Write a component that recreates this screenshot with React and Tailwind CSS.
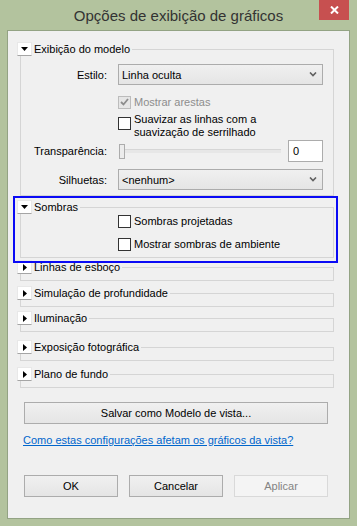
import React from 'react';

const Toggle = ({ open }) => (
  <div className="w-[15px] h-[14px] bg-white border border-[#e8e8e8] border-b-[#a5a5a5] flex items-center justify-center shrink-0">
    {open ? (
      <svg width="7" height="4" viewBox="0 0 7 4"><path d="M0 0h7L3.5 4z" fill="#000" /></svg>
    ) : (
      <svg width="4" height="7" viewBox="0 0 4 7"><path d="M0 0v7L4 3.5z" fill="#000" /></svg>
    )}
  </div>
);

const GroupHeader = ({ open, label }) => (
  <div className="flex items-center h-[14px]">
    <Toggle open={open} />
    <span className="ml-[2px] mr-[2px] leading-none whitespace-nowrap">{label}</span>
    <div className="flex-1 h-[7px] self-end border-t border-r border-[#d5d5d5]" />
  </div>
);

const Checkbox = ({ checked, disabled }) => (
  <div
    className={`w-[13px] h-[13px] shrink-0 border flex items-center justify-center ${
      disabled ? 'border-[#bcbcbc] bg-[#e6e6e6]' : 'border-[#333333] bg-white'
    }`}
  >
    {checked && (
      <svg width="9" height="8" viewBox="0 0 9 8">
        <path d="M1 4l2.5 2.5L8 1" stroke={disabled ? '#8d8d8d' : '#000'} strokeWidth="1.8" fill="none" />
      </svg>
    )}
  </div>
);

const Select = ({ value }) => (
  <div className="w-[205px] h-[21px] border border-[#acacac] bg-gradient-to-b from-[#f0f0f0] to-[#e5e5e5] flex items-center pl-[3px] pr-[5px]">
    <span className="flex-1">{value}</span>
    <svg width="8" height="5" viewBox="0 0 8 5">
      <path d="M1 0.5l3 3 3-3" stroke="#606060" strokeWidth="1.6" fill="none" />
    </svg>
  </div>
);

const Button = ({ children, disabled, className = '' }) => (
  <div
    className={`h-[22px] flex items-center justify-center border ${
      disabled
        ? 'border-[#d9d9d9] bg-[#f4f4f4] text-[#838383]'
        : 'border-[#acacac] bg-gradient-to-b from-[#f0f0f0] to-[#e5e5e5] text-black'
    } ${className}`}
  >
    {children}
  </div>
);

const Collapsed = ({ label, className }) => (
  <div className={className}>
    <GroupHeader open={false} label={label} />
    <div className="ml-[3px] h-[7px] border-l border-r border-b border-[#d5d5d5]" />
  </div>
);

export default function App() {
  return (
    <div className="w-[357px] h-[526px] bg-[#b3c39e] flex flex-col font-['Liberation_Sans',Arial,sans-serif] text-[11px] leading-[14px] text-black overflow-hidden">
      {/* Title bar */}
      <div className="relative h-[30px] flex items-center justify-center">
        <span className="text-[15px] leading-[18px] text-[#333333] mt-[1px]">Opções de exibição de gráficos</span>
        <div className="absolute top-0 right-[8px] w-[30px] h-[20px] bg-[#c75050] flex items-center justify-center">
          <svg width="9" height="8" viewBox="0 0 9 8">
            <path d="M1 0.5l7 7M8 0.5l-7 7" stroke="#fff" strokeWidth="2" />
          </svg>
        </div>
      </div>

      {/* Client area */}
      <div className="mx-[7px] h-[489px] border border-[#93a384] bg-[#f0f0f0] flex flex-col">
        <div className="pt-[11px] pl-[9px] pr-[15px] flex flex-col">
          {/* Exibição do modelo */}
          <div>
            <GroupHeader open label="Exibição do modelo" />
            <div className="ml-[3px] border-l border-r border-b border-[#d5d5d5] pt-[8px] pb-[5px] flex flex-col">
              <div className="flex items-center">
                <span className="w-[86px] text-right">Estilo:</span>
                <div className="ml-[11px]">
                  <Select value="Linha oculta" />
                </div>
              </div>
              <div className="flex items-center mt-[10px] ml-[97px] gap-[3px]">
                <Checkbox checked disabled />
                <span className="text-[#8d8d8d]">Mostrar arestas</span>
              </div>
              <div className="flex items-start mt-[4px] ml-[97px] gap-[3px]">
                <div className="mt-[4px]">
                  <Checkbox />
                </div>
                <span className="leading-[13px]">
                  Suavizar as linhas com a<br />suavização de serrilhado
                </span>
              </div>
              <div className="flex items-center mt-[1px]">
                <span className="w-[86px] text-right">Transparência:</span>
                <div className="ml-[12px] w-[162px] flex items-center">
                  <div className="w-[6px] h-[15px] border border-[#acacac] bg-[#ececec]" />
                  <div className="flex-1 h-[4px] bg-[#e7e7e7] border-t border-[#d6d6d6]" />
                </div>
                <div className="ml-[7px] w-[35px] h-[22px] bg-white border border-[#acacac] flex items-center pl-[4px]">
                  0
                </div>
              </div>
              <div className="flex items-center mt-[7px]">
                <span className="w-[86px] text-right">Silhuetas:</span>
                <div className="ml-[11px]">
                  <Select value="<nenhum>" />
                </div>
              </div>
            </div>
          </div>

          {/* Sombras */}
          <div className="relative mt-[4px]">
            <GroupHeader open label="Sombras" />
            <div className="ml-[3px] border-l border-r border-b border-[#d5d5d5] pb-[6px] flex flex-col">
              <div className="flex items-center ml-[97px] gap-[3px]">
                <Checkbox />
                <span>Sombras projetadas</span>
              </div>
              <div className="flex items-center ml-[97px] gap-[3px] mt-[9px]">
                <Checkbox />
                <span>Mostrar sombras de ambiente</span>
              </div>
            </div>
            <div className="absolute -left-[4px] -right-[4px] -top-[4px] -bottom-[5px] border-2 border-[#0a0af5] pointer-events-none z-10" />
          </div>

          <Collapsed className="mt-[2px]" label="Linhas de esboço" />
          <Collapsed className="mt-[5px]" label="Simulação de profundidade" />
          <Collapsed className="mt-[4px]" label="Iluminação" />
          <Collapsed className="mt-[8px]" label="Exposição fotográfica" />
          <Collapsed className="mt-[6px]" label="Plano de fundo" />
        </div>

        <div className="pl-[16px] flex flex-col">
          <Button className="mt-[14px] w-[304px]">Salvar como Modelo de vista...</Button>
          <span className="mt-[9px] -ml-[1px] text-[#0066cc] underline">
            Como estas configurações afetam os gráficos da vista?
          </span>
          <div className="mt-[28px] flex gap-[11px]">
            <Button className="w-[94px]">OK</Button>
            <Button className="w-[94px]">Cancelar</Button>
            <Button className="w-[94px]" disabled>Aplicar</Button>
          </div>
        </div>
      </div>
    </div>
  );
}
